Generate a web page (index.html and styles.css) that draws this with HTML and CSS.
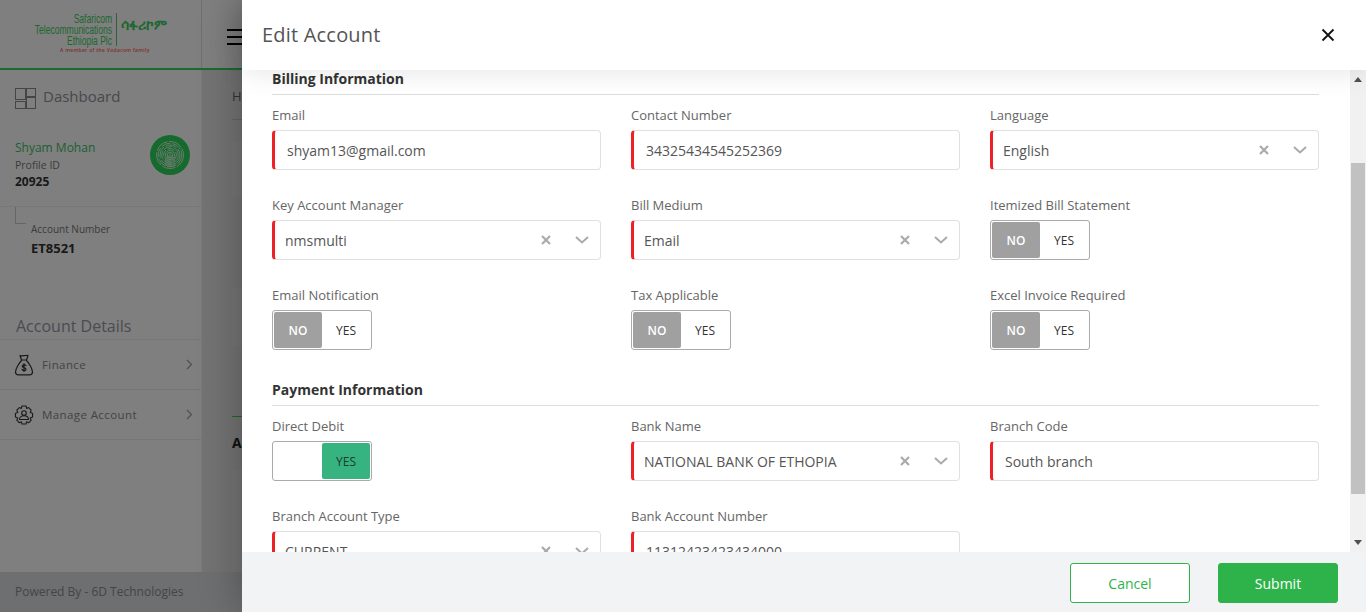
FILE: index.html
```html
<!DOCTYPE html>
<html lang="en">
<head>
<meta charset="utf-8">
<title>Edit Account</title>
<link rel="stylesheet" href="styles.css">
</head>
<body>
<div class="app">
  <header class="topbar">
    <div class="logo">
      <div class="logo-main">
        <div class="logo-en"><div class="logo-en-inner">Safaricom<br>Telecommunications<br>Ethiopia Plc</div></div>
        <div class="logo-am">ሳፋሪኮም</div>
      </div>
      <div class="logo-tag">A member of the Vodacom family</div>
    </div>
    <div class="burger"><span></span><span></span><span></span></div>
  </header>
  <div class="content">
    <aside class="sidebar">
      <div class="dash">
        <svg class="dash-icon" width="21" height="21" viewBox="0 0 21 21" fill="none" stroke="#8a8a8a" stroke-width="1"><rect x=".5" y=".5" width="10" height="11"/><rect x="11.500" y=".5" width="9" height="8"/><rect x="11.500" y="9.500" width="9" height="11"/><rect x=".5" y="13.500" width="10" height="7"/></svg>
        <span>Dashboard</span>
      </div>
      <div class="profile">
        <div>
          <div class="p-name">Shyam Mohan</div>
          <div class="p-label">Profile ID</div>
          <div class="p-id">20925</div>
        </div>
        <svg class="avatar" width="40" height="40" viewBox="0 0 40 40" fill="none">
          <circle cx="20" cy="20" r="20" fill="#2fd45c"/>
          <g stroke="#fff" stroke-width=".9" opacity=".85">
            <circle cx="20" cy="20" r="13.500" stroke-dasharray="14 1.500"/>
            <circle cx="20" cy="20" r="11.800" stroke-dasharray="10 1.500"/>
            <circle cx="20" cy="20" r="10" stroke-dasharray="12 2"/>
            <circle cx="20" cy="20" r="8.200" stroke-dasharray="9 1.500"/>
            <circle cx="20" cy="20" r="6.400" stroke-dasharray="7 2"/>
            <circle cx="20" cy="20" r="4.600"/>
            <circle cx="20" cy="20" r="2.800"/>
            <path d="M20 18v14M18 20v12M22 20v12M16 22v9M24 22v9"/>
          </g>
        </svg>
      </div>
      <div class="account">
        <div class="tree"></div>
        <div class="a-label">Account Number</div>
        <div class="a-num">ET8521</div>
      </div>
      <div class="side-title">Account Details</div>
      <nav class="menu">
        <div class="menu-row">
          <svg width="20" height="22" viewBox="0 0 20 22" fill="none" stroke="#333" stroke-width="1.200" stroke-linejoin="round" stroke-linecap="round"><path d="M6 1.500c1.500 1 2.500.2 4 .2s2.500-.8 4-.2L12.500 6h-5zM7.500 6h5M7.500 6.500C5 9 1.500 15 1.500 18c0 1.800 1 2.800 3 2.800h11c2 0 3-1 3-2.800 0-3-3.500-9-6-11.500"/><path d="M12 11.500c-.5-.8-3.500-1-3.800.5-.3 2 4 1.300 3.800 3.500-.2 1.500-3.500 1.300-4-.2M10 9.500v8"/></svg>
          <span>Finance</span>
          <svg class="chev" width="7" height="11" viewBox="0 0 7 11" fill="none" stroke="#a0a0a0" stroke-width="1.300"><path d="M1 1l4.500 4.500L1 10"/></svg>
        </div>
        <div class="menu-row">
          <svg width="20" height="20" viewBox="0 0 20 20" fill="none" stroke="#333" stroke-width="1.100" stroke-linejoin="round"><path d="M8 1h4l.6 2.400 2-.8 2.600 2.600-1 2 2.400 1.200v3.600l-2.400 1 1 2.200-2.600 2.600-2-1L12 19H8l-.6-2.200-2 1-2.600-2.600 1-2.200L1.400 12V8.400L3.800 7.200l-1-2 2.600-2.600 2 .8z"/><circle cx="10" cy="8" r="2.300"/><path d="M5.500 14.500c0-5 9-5 9 0z"/></svg>
          <span>Manage Account</span>
          <svg class="chev" width="7" height="11" viewBox="0 0 7 11" fill="none" stroke="#a0a0a0" stroke-width="1.300"><path d="M1 1l4.500 4.500L1 10"/></svg>
        </div>
      </nav>
    </aside>
    <main class="main">
      <div class="crumb">Home</div>
      <div class="card card-a"></div>
      <div class="card card-b"></div>
      <div class="green-rule"></div>
      <div class="main-title">Account</div>
      <div class="card card-c"></div>
    </main>
  </div>
  <footer class="page-foot">Powered By - 6D Technologies</footer>
</div>
<div class="overlay"></div>
<section class="modal">
  <div class="modal-head">
    <h1>Edit Account</h1>
    <svg width="14" height="14" viewBox="0 0 14 14" fill="none" stroke="#111" stroke-width="1.800"><path d="M1.500 1.500l11 11M12.500 1.500l-11 11"/></svg>
  </div>
  <div class="modal-body">
    <div class="form">
      <h2 class="sec">Billing Information</h2>
      <div class="grid">
        <div class="field"><label>Email</label><div class="ctl req"><span class="txt">shyam13@gmail.com</span></div></div>
        <div class="field"><label>Contact Number</label><div class="ctl req"><span class="txt">34325434545252369</span></div></div>
        <div class="field"><label>Language</label><div class="ctl req sel"><span class="txt">English</span><svg class="clr" width="10" height="10" viewBox="0 0 10 10"><path d="M1 1l8 8M9 1L1 9"/></svg><svg class="arr" width="14" height="8" viewBox="0 0 14 8"><path d="M1 1l6 5.500L13 1"/></svg></div></div>
        <div class="field"><label>Key Account Manager</label><div class="ctl req sel"><span class="txt">nmsmulti</span><svg class="clr" width="10" height="10" viewBox="0 0 10 10"><path d="M1 1l8 8M9 1L1 9"/></svg><svg class="arr" width="14" height="8" viewBox="0 0 14 8"><path d="M1 1l6 5.500L13 1"/></svg></div></div>
        <div class="field"><label>Bill Medium</label><div class="ctl req sel"><span class="txt">Email</span><svg class="clr" width="10" height="10" viewBox="0 0 10 10"><path d="M1 1l8 8M9 1L1 9"/></svg><svg class="arr" width="14" height="8" viewBox="0 0 14 8"><path d="M1 1l6 5.500L13 1"/></svg></div></div>
        <div class="field"><label>Itemized Bill Statement</label><div class="toggle"><span class="opt off">NO</span><span class="opt">YES</span></div></div>
        <div class="field"><label>Email Notification</label><div class="toggle"><span class="opt off">NO</span><span class="opt">YES</span></div></div>
        <div class="field"><label>Tax Applicable</label><div class="toggle"><span class="opt off">NO</span><span class="opt">YES</span></div></div>
        <div class="field"><label>Excel Invoice Required</label><div class="toggle"><span class="opt off">NO</span><span class="opt">YES</span></div></div>
      </div>
      <h2 class="sec sec-next">Payment Information</h2>
      <div class="grid">
        <div class="field"><label>Direct Debit</label><div class="toggle"><span class="opt"></span><span class="opt on">YES</span></div></div>
        <div class="field"><label>Bank Name</label><div class="ctl req sel"><span class="txt">NATIONAL BANK OF ETHOPIA</span><svg class="clr" width="10" height="10" viewBox="0 0 10 10"><path d="M1 1l8 8M9 1L1 9"/></svg><svg class="arr" width="14" height="8" viewBox="0 0 14 8"><path d="M1 1l6 5.500L13 1"/></svg></div></div>
        <div class="field"><label>Branch Code</label><div class="ctl req"><span class="txt">South branch</span></div></div>
        <div class="field"><label>Branch Account Type</label><div class="ctl req sel"><span class="txt">CURRENT</span><svg class="clr" width="10" height="10" viewBox="0 0 10 10"><path d="M1 1l8 8M9 1L1 9"/></svg><svg class="arr" width="14" height="8" viewBox="0 0 14 8"><path d="M1 1l6 5.500L13 1"/></svg></div></div>
        <div class="field"><label>Bank Account Number</label><div class="ctl req"><span class="txt">11312423423434000</span></div></div>
      </div>
    </div>
    <div class="scrollbar">
      <svg class="sb-arrow" width="8" height="5" viewBox="0 0 8 5"><path d="M4 0l4 5H0z"/></svg>
      <div class="sb-thumb"></div>
      <svg class="sb-arrow" width="8" height="5" viewBox="0 0 8 5"><path d="M0 0h8L4 5z"/></svg>
    </div>
  </div>
  <div class="modal-foot">
    <button class="btn btn-ghost" type="button">Cancel</button>
    <button class="btn btn-solid" type="button">Submit</button>
  </div>
</section>
</body>
</html>
```
FILE: styles.css
```css
* { box-sizing: border-box; }
html, body { margin: 0; height: 612px; overflow: hidden; }
body { font-family: "Open Sans", "Liberation Sans", sans-serif; background: #fff; position: relative; }

.app { height: 612px; display: flex; flex-direction: column; }
.topbar { height: 70px; flex: none; display: flex; border-bottom: 2px solid #34d660; background: #fff; }
.logo { width: 202px; border-right: 1px solid #d8e4dc; display: flex; flex-direction: column; align-items: flex-start; padding: 13px 0 0 34px; }
.logo-main { display: flex; align-items: stretch; width: 135px; }
.logo-en { width: 83px; padding-right: 4px; border-right: 1px solid #5cc07a; height: 33px; }
.logo-en-inner { width: 119px; margin-left: -41px; transform: scaleX(.655); transform-origin: right center; font-family: "Liberation Sans", sans-serif; font-size: 13px; line-height: 11px; color: #3ccf62; text-align: right; white-space: nowrap; }
.logo-am { font-family: "DejaVu Sans", sans-serif; font-size: 14px; font-weight: 700; color: #3ccf62; padding: 4px 0 0 4px; white-space: nowrap; }
.logo-tag { font-size: 5px; font-weight: 600; letter-spacing: .3px; color: #ff5a5a; margin: 0 0 0 26px; white-space: nowrap; line-height: 8px; }
.burger { margin: 29px 0 0 25px; width: 20px; display: flex; flex-direction: column; gap: 5px; }
.burger span { display: block; height: 2px; background: #000; }

.content { flex: 1; min-height: 0; display: flex; }
.sidebar { width: 202px; flex: none; background: #fff; border-right: 1px solid #f4f4f4; }
.dash { height: 52px; display: flex; align-items: center; padding-left: 15px; gap: 7px; color: #909098; font-size: 15px; }
.dash-icon { margin-top: 4px; }
.profile { height: 85px; padding: 17px 11px 0 15px; display: flex; justify-content: space-between; align-items: flex-start; border-bottom: 1px solid #f0f0f0; }
.p-name { font-size: 12px; line-height: 18px; color: #3cbf66; }
.p-label { font-size: 10.500px; line-height: 16px; color: #777; }
.p-id { font-size: 12px; line-height: 16px; margin-top: 1px; font-weight: 700; color: #333; }
.avatar { margin-top: -4px; }
.account { padding-left: 31px; position: relative; height: 108px; }
.tree { position: absolute; left: 15px; top: 0; width: 11px; height: 17px; border-left: 1px solid #ccc; border-bottom: 1px solid #ccc; }
.a-label { font-size: 10px; line-height: 14px; padding-top: 15px; height: 30px; color: #777; }
.a-num { font-size: 13px; line-height: 18px; font-weight: 700; color: #333; margin-top: 2px; }
.side-title { font-size: 16px; line-height: 22px; color: #9696a6; padding-left: 16px; height: 24px; }
.menu-row { height: 50px; border-top: 1px solid #ececec; display: flex; align-items: center; padding: 0 8px 0 14px; gap: 8px; font-size: 11.500px; letter-spacing: .4px; color: #888; }
.menu-row:last-child { border-bottom: 1px solid #ececec; height: 51px; }
.chev { margin-left: auto; }

.main { flex: 1; min-width: 0; background: #e6e6e6; padding: 15px 30px 0; }
.crumb { font-size: 13px; line-height: 22px; color: #666; height: 35px; border-bottom: 1px solid #c8c8c8; }
.card { background: #ebebeb; border-radius: 4px; }
.card-a { height: 56px; margin-top: 21px; }
.card-b { height: 58px; margin-top: 91px; }
.green-rule { height: 1px; background: #34d660; margin-top: 70px; }
.main-title { font-size: 14px; line-height: 20px; font-weight: 700; color: #222; margin-top: 16px; height: 20px; }
.card-c { height: 110px; margin-top: 16px; }

.page-foot { height: 40px; flex: none; background: #dcdfe3; display: flex; align-items: center; padding: 0 0 2px 15px; font-size: 12px; color: #8a8a8a; }

.overlay { position: absolute; inset: 0; background: rgba(0, 0, 0, .5); }

.modal { position: absolute; top: 0; right: 0; bottom: 0; width: 1124px; background: #fff; display: flex; flex-direction: column; box-shadow: 0 0 40px rgba(0, 0, 0, .3); }
.modal-head { height: 70px; flex: none; display: flex; align-items: center; justify-content: space-between; padding: 0 31px 0 20px; background: #fff; position: relative; box-shadow: 0 0 30px rgba(0, 0, 0, .12); }
.modal-head h1 { margin: 0 0 2px; font-size: 20px; font-weight: 400; color: #555; letter-spacing: .2px; }
.modal-body { flex: 1; min-height: 0; display: flex; overflow: hidden; }
.form { flex: 1; min-width: 0; padding: 0 31px 0 30px; }
.sec { margin: 0 0 10px; height: 25px; border-bottom: 1px solid #ddd; font-size: 14px; line-height: 18px; font-weight: 700; color: #333; }
.sec-next { margin-top: 31px; }
.grid { display: grid; grid-template-columns: repeat(3, 329px); column-gap: 30px; row-gap: 25px; }
.field label { display: block; height: 25px; padding-bottom: 5px; font-size: 13px; line-height: 20px; color: #666; white-space: nowrap; }
.ctl { height: 40px; display: flex; align-items: center; background: #fff; border: 1px solid #e0e0e0; border-left: 3px solid #ee2226; border-radius: 4px; padding: 0 12px; font-size: 14px; color: #555; }
.sel { padding-left: 10px; }
.txt { flex: 1; white-space: nowrap; }
.clr { stroke: #aaa; stroke-width: 2.200; fill: none; margin-right: 24px; margin-left: 2px; }
.arr { stroke: #aaa; stroke-width: 2; fill: none; margin-right: -1px; }
.toggle { width: 100px; height: 40px; display: flex; padding: 1px; border: 1px solid #aaa; border-radius: 3px; background: #fff; }
.opt { flex: 1; display: flex; align-items: center; justify-content: center; font-size: 12px; color: #333; border-radius: 2px; }
.off { background: #a0a0a0; color: #fff; font-weight: 600; }
.on { background: #36b37e; color: #1d3b2e; }

.scrollbar { width: 16px; flex: none; background: #f1f1f1; display: flex; flex-direction: column; align-items: center; padding: 7px 0; }
.sb-arrow { fill: #505050; flex: none; }
.sb-thumb { width: 14px; height: 331px; margin: 81px 0 auto; background: #c1c1c1; flex: none; }

.modal-foot { height: 60px; flex: none; background: #f2f3f5; display: flex; justify-content: flex-end; align-items: center; gap: 28px; padding: 2px 28px 0 0; }
.btn { width: 120px; height: 40px; border-radius: 3px; font-family: inherit; font-size: 14px; cursor: pointer; }
.btn-ghost { background: #fff; border: 1px solid #2db34a; color: #2db34a; }
.btn-solid { background: #2db34a; border: 1px solid #2db34a; color: #fff; font-weight: 500; }
```
